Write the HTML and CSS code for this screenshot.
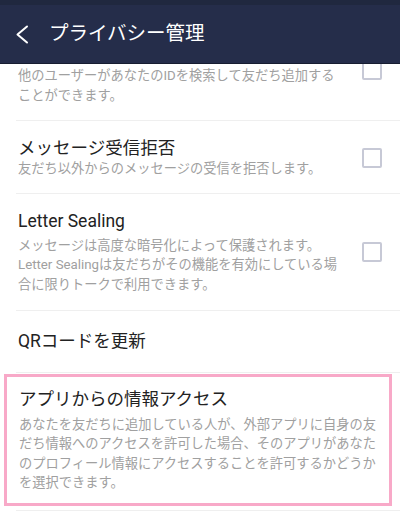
FILE: index.html
```html
<!DOCTYPE html>
<html lang="ja">
<head>
<meta charset="utf-8">
<title>プライバシー管理</title>
<link rel="stylesheet" href="styles.css">
</head>
<body>
<header class="appbar">
  <svg class="back" viewBox="0 0 14 19" width="14" height="19" aria-hidden="true">
    <path d="M12 1.5 L2.5 9.5 L12 17.5" fill="none" stroke="#ffffff" stroke-width="2" stroke-linecap="round" stroke-linejoin="round"/>
  </svg>
  <h1 class="appbar-title">プライバシー管理</h1>
</header>
<main class="list">
  <div class="row row--clipped">
    <div class="text">
      <div class="desc">他のユーザーがあなたのIDを検索して友だち追加する<br>ことができます。</div>
    </div>
    <span class="checkbox checkbox--up"></span>
  </div>
  <div class="row row--tight">
    <div class="text">
      <div class="title">メッセージ受信拒否</div>
      <div class="desc">友だち以外からのメッセージの受信を拒否します。</div>
    </div>
    <span class="checkbox"></span>
  </div>
  <div class="row row--loose">
    <div class="text">
      <div class="title">Letter Sealing</div>
      <div class="desc">メッセージは高度な暗号化によって保護されます。<br>Letter Sealingは友だちがその機能を有効にしている場<br>合に限りトークで利用できます。</div>
    </div>
    <span class="checkbox"></span>
  </div>
  <div class="row row--single">
    <div class="text">
      <div class="title">QRコードを更新</div>
    </div>
  </div>
  <div class="row row--highlight">
    <div class="text">
      <div class="title">アプリからの情報アクセス</div>
      <div class="desc">あなたを友だちに追加している人が、外部アプリに自身の友<br>だち情報へのアクセスを許可した場合、そのアプリがあなた<br>のプロフィール情報にアクセスすることを許可するかどうか<br>を選択できます。</div>
    </div>
  </div>
</main>
</body>
</html>
```

FILE: styles.css
```css
html, body {
  margin: 0;
  padding: 0;
  background: #ffffff;
  overflow: hidden;
}

body {
  width: 400px;
  height: 517px;
  font-family: Roboto, "Noto Sans CJK JP", "Noto Sans", sans-serif;
  color: #222222;
}

.appbar {
  position: relative;
  z-index: 2;
  box-sizing: border-box;
  height: 64px;
  padding: 5px 0 0 15px;
  display: flex;
  align-items: center;
  gap: 20px;
  background: linear-gradient(#20283f 0 5px, #252d4a 5px);
  border-bottom: 1px solid #171d31;
}

.back {
  display: block;
  flex: none;
}

.appbar-title {
  margin: 0;
  font-size: 19.5px;
  font-weight: normal;
  color: #ffffff;
  line-height: 26px;
  letter-spacing: 0;
}

.list {
  margin-top: -39.75px;
}

.row {
  position: relative;
  display: flex;
  align-items: center;
  margin-left: 16px;
  padding: 16px 18px 15px 2px;
  border-bottom: 1px solid #efefef;
  background: #ffffff;
}

.text {
  flex: 1;
  min-width: 0;
}

.title {
  font-size: 17.5px;
  font-weight: normal;
  line-height: 22px;
  color: #222222;
  white-space: nowrap;
}

.desc {
  margin-top: 4px;
  font-size: 13.25px;
  font-weight: normal;
  line-height: 19.5px;
  color: #a0a0a0;
  white-space: nowrap;
}

.row--clipped {
  padding-top: 42px;
}

.row--clipped .desc {
  margin-top: 0;
}

.row--tight {
  padding-bottom: 14px;
}

.row--tight .desc {
  margin-top: 0;
}

.row--loose {
  padding-bottom: 16px;
}

.row--single {
  padding-top: 19px;
  padding-bottom: 20px;
}

.row--highlight {
  padding-top: 14.5px;
  padding-bottom: 17px;
}

.row--highlight .text {
  padding-left: 1px;
}

.row--highlight .desc {
  margin-top: 5px;
}

.row--highlight::after {
  content: "";
  position: absolute;
  top: 1px;
  left: -12px;
  right: 8px;
  bottom: 4px;
  border: 3px solid #f8a9c8;
  pointer-events: none;
}

.checkbox {
  flex: none;
  box-sizing: border-box;
  width: 20px;
  height: 20px;
  margin-left: 12px;
  border: 2px solid #c7c9d6;
  border-radius: 2px;
}

.checkbox--up {
  align-self: flex-start;
  margin-top: -6px;
}
```
